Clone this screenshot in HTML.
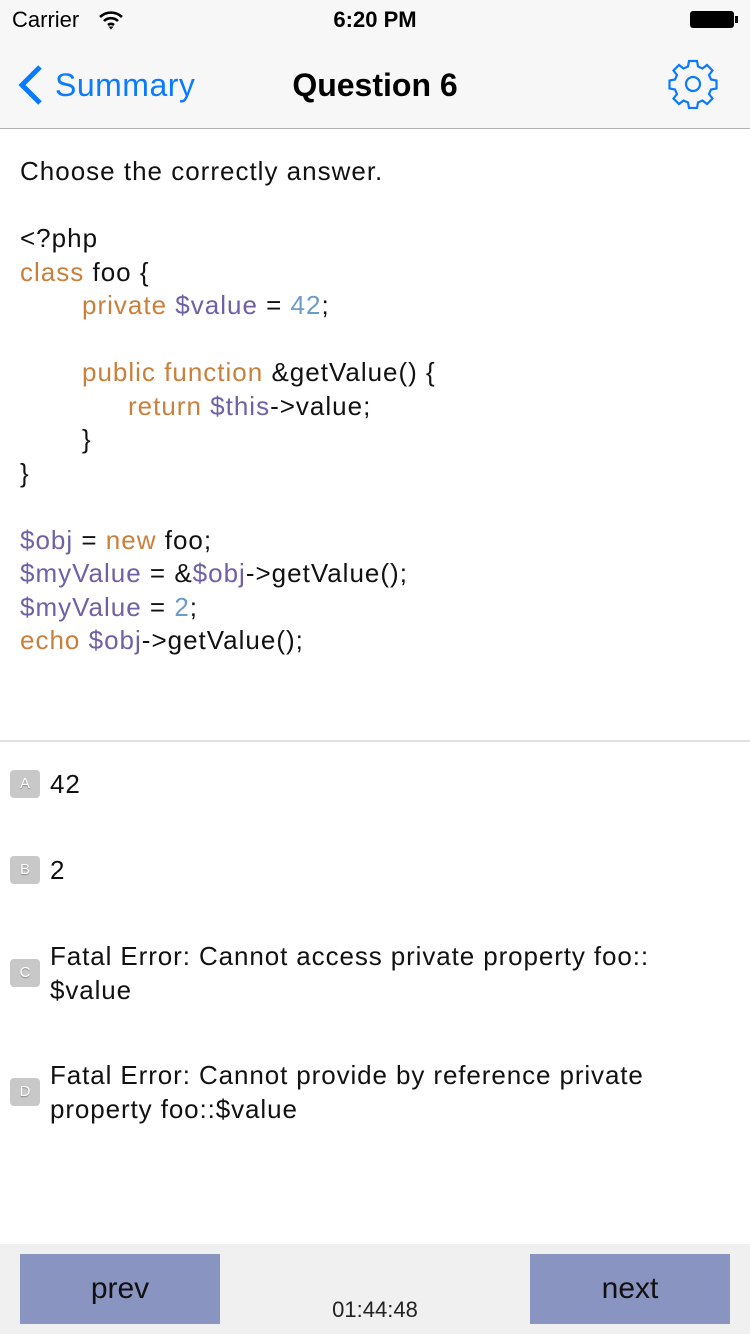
<!DOCTYPE html>
<html><head><meta charset="utf-8"><style>
body{margin:0;width:750px;height:1334px;position:relative;background:#fff;font-family:"Liberation Sans",Arial,sans-serif;overflow:hidden}
.abs{position:absolute}
.o{color:#c9803c}.p{color:#7060a4}.n{color:#6b9cc8}
.code{left:20px;top:155px;font-size:26px;line-height:33.5px;color:#111;white-space:pre;letter-spacing:1px}
.i1{display:inline-block;width:62px}.i2{display:inline-block;width:108px}
.badge{position:absolute;left:10px;width:30px;height:28px;border-radius:4px;background:#c8c8c8;color:#fff;font-size:15px;text-align:center;line-height:28px;text-shadow:0 1px 1px #888}
.opt{position:absolute;left:50px;font-size:26px;line-height:34px;color:#111;letter-spacing:0.9px}
.btn{position:absolute;top:1254px;width:200px;height:70px;background:#8994c0;font-size:30px;text-align:center;line-height:70px;color:#111}
</style></head><body>
<div class="abs" style="left:0;top:0;width:750px;height:128px;background:#f7f7f7;border-bottom:1px solid #b2b2b2"></div>
<div class="abs" style="left:12px;top:7px;font-size:22px;">Carrier</div>
<svg class="abs" style="left:98px;top:10px" width="26" height="20" viewBox="0 0 26 20"><path d="M2 7a16 16 0 0 1 22 0M6 11a10 10 0 0 1 14 0M10 15a4.5 4.5 0 0 1 6 0" stroke="#000" stroke-width="2.6" fill="none"/><path d="M10.5 16.5L13 19.5 15.5 16.5z" fill="#000"/></svg>
<div class="abs" style="left:0;width:750px;text-align:center;top:7px;font-size:22px;font-weight:bold">6:20 PM</div>
<div class="abs" style="left:690px;top:11px;width:44px;height:17px;background:#000;border-radius:3px"></div>
<div class="abs" style="left:735px;top:16px;width:3px;height:7px;background:#000"></div>
<svg class="abs" style="left:16px;top:64px" width="28" height="42" viewBox="0 0 28 42"><path d="M24 3L6 21 24 39" stroke="#0a7aff" stroke-width="5" fill="none"/></svg>
<div class="abs" style="left:55px;top:67px;font-size:32px;color:#0a7aff;letter-spacing:0.5px">Summary</div>
<div class="abs" style="left:0;width:750px;text-align:center;top:67px;font-size:32px;font-weight:bold">Question 6</div>
<svg class="abs" style="left:668px;top:59px" width="50" height="50" viewBox="-25 -25 50 50"><g fill="none" stroke="#0a7aff" stroke-width="2.2"><path d="M-4-23h8l1 5.5 4.5 2 4.5-3.5 5.5 5.5-3.5 4.5 2 4.5 5.5 1v8l-5.5 1-2 4.5 3.5 4.5-5.5 5.5-4.5-3.5-4.5 2-1 5.5h-8l-1-5.5-4.5-2-4.5 3.5-5.5-5.5 3.5-4.5-2-4.5-5.5-1v-8l5.5-1 2-4.5-3.5-4.5 5.5-5.5 4.5 3.5 4.5-2z"/><circle r="7"/></g></svg>
<div class="abs code">Choose the correctly answer.

&lt;?php
<span class="o">class</span> foo {
<span class="i1"></span><span class="o">private</span> <span class="p">$value</span> = <span class="n">42</span>;

<span class="i1"></span><span class="o">public function</span> &amp;getValue() {
<span class="i2"></span><span class="o">return</span> <span class="p">$this</span>-&gt;value;
<span class="i1"></span>}
}

<span class="p">$obj</span> = <span class="o">new</span> foo;
<span class="p">$myValue</span> = &amp;<span class="p">$obj</span>-&gt;getValue();
<span class="p">$myValue</span> = <span class="n">2</span>;
<span class="o">echo</span> <span class="p">$obj</span>-&gt;getValue();</div>
<div class="abs" style="left:0;top:740px;width:750px;height:2px;background:#e0e0e0"></div>
<div class="badge" style="top:770px">A</div><div class="opt" style="top:767px">42</div>
<div class="badge" style="top:856px">B</div><div class="opt" style="top:853px">2</div>
<div class="badge" style="top:959px">C</div><div class="opt" style="top:939px">Fatal Error: Cannot access private property foo::<br>$value</div>
<div class="badge" style="top:1078px">D</div><div class="opt" style="top:1058px">Fatal Error: Cannot provide by reference private<br>property foo::$value</div>
<div class="abs" style="left:0;top:1244px;width:750px;height:90px;background:#f0f0f0"></div>
<div class="btn" style="left:20px">prev</div>
<div class="btn" style="left:530px">next</div>
<div class="abs" style="left:0;width:750px;text-align:center;top:1297px;font-size:22px;color:#222">01:44:48</div>
</body></html>
